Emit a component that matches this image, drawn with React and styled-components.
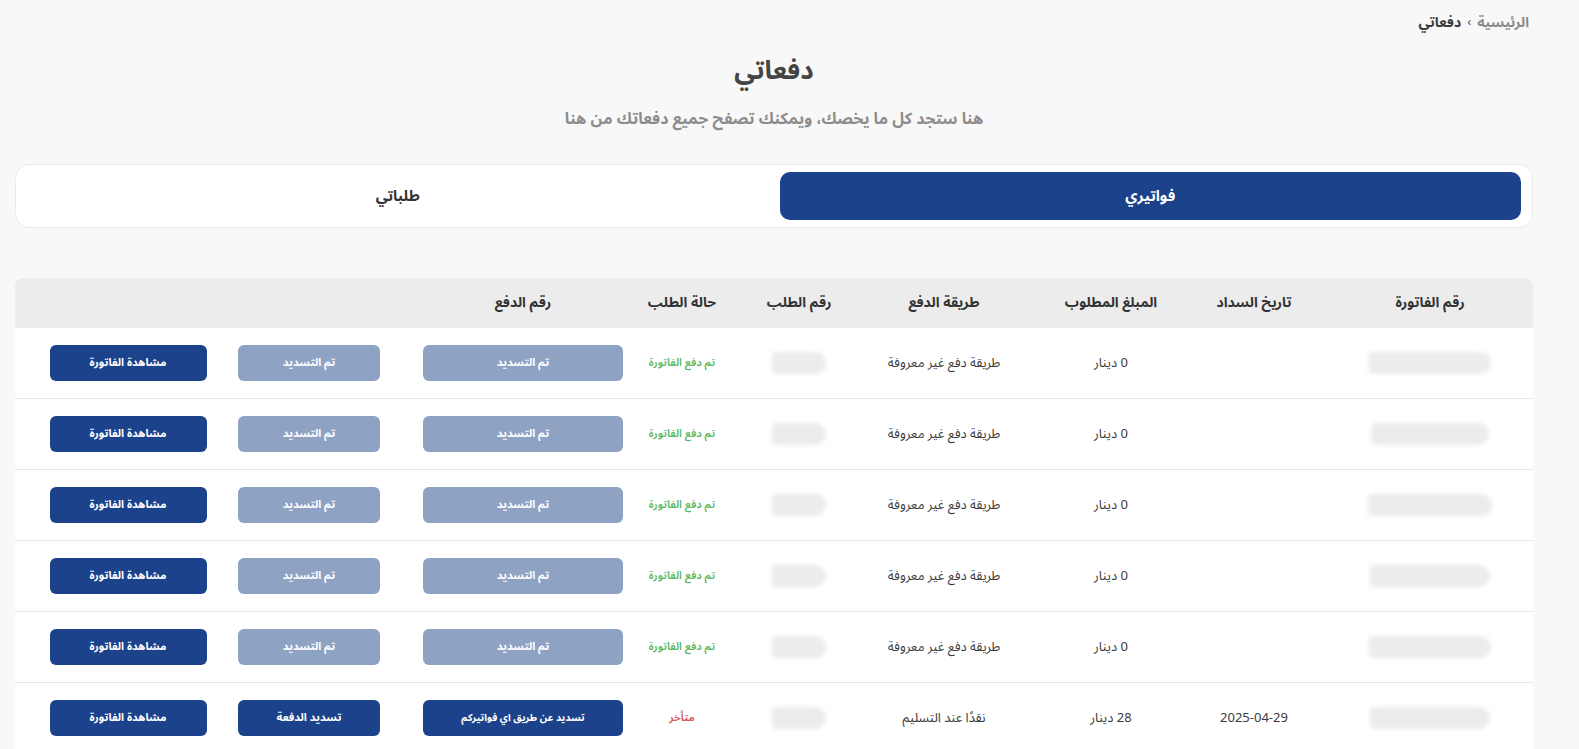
import React from "react";
import styled, { createGlobalStyle } from "styled-components";

const GlobalStyle = createGlobalStyle`
  html, body {
    margin: 0;
    padding: 0;
    background: #f8f8f8;
    overflow: hidden;
  }
  body {
    font-family: "Noto Sans Arabic", "Noto Sans", "DejaVu Sans", sans-serif;
    color: #3a3a3a;
  }
`;

const Page = styled.div`
  direction: rtl;
  padding: 0 46px 0 15px;
  min-height: 749px;
`;

const Breadcrumb = styled.nav`
  display: flex;
  align-items: center;
  gap: 6px;
  height: 44px;
  padding-right: 4px;
  font-size: 14px;
  font-weight: 700;
`;

const Crumb = styled.span`
  color: ${props => (props.current ? "#3b3b3b" : "#8a8a8a")};
`;

const Chevron = styled.span`
  color: #555;
  font-size: 13px;
  font-weight: 400;
`;

const Header = styled.header`
  display: flex;
  flex-direction: column;
  align-items: center;
  gap: 14px;
  margin-top: 10px;
`;

const Title = styled.h1`
  margin: 0;
  font-size: 26px;
  font-weight: 700;
  color: #444;
  line-height: 1.3;
`;

const Subtitle = styled.p`
  margin: 0;
  font-size: 16px;
  font-weight: 700;
  color: #8c8c8c;
`;

const Tabs = styled.div`
  display: grid;
  grid-template-columns: 1fr 1fr;
  gap: 11px;
  margin-top: 28px;
  padding: 7px 11px;
  height: 64px;
  box-sizing: border-box;
  background: #fff;
  border: 1px solid #ebebeb;
  border-radius: 14px;
`;

const Tab = styled.button`
  display: flex;
  align-items: center;
  justify-content: center;
  border: none;
  border-radius: 10px;
  font-family: inherit;
  font-size: 15px;
  font-weight: 700;
  cursor: pointer;
  background: ${props => (props.active ? "#1b428a" : "transparent")};
  color: ${props => (props.active ? "#fff" : "#333")};
`;

const Table = styled.div`
  margin-top: 50px;
  background: #fff;
  border-radius: 8px 8px 0 0;
  overflow: hidden;
`;

// right to left: invoice no, date, amount, method, order no, status, payment no, pay, view
const COLS = "234px 90px 196px 138px 152px 82px 236px 192px 170px";

const HeadRow = styled.div`
  display: grid;
  grid-template-columns: ${COLS};
  padding-left: 28px;
  height: 50px;
  background: #ececec;
`;

const HeadCell = styled.div`
  display: flex;
  align-items: center;
  justify-content: center;
  white-space: nowrap;
  font-size: 14px;
  font-weight: 700;
  color: #333;
  padding-left: ${props => (props.shift ? "28px" : "0")};
`;

const Row = styled.div`
  display: grid;
  grid-template-columns: ${COLS};
  padding-left: 28px;
  height: 70px;
  border-top: ${props => (props.first ? "none" : "1px solid #e6e6e6")};
`;

const Cell = styled.div`
  display: flex;
  align-items: center;
  justify-content: center;
  white-space: nowrap;
  font-size: 13px;
  color: ${props => props.color || "#3a3a3a"};
  font-weight: ${props => (props.bold ? 600 : 400)};
  padding-left: ${props => (props.shift ? "28px" : "0")};
`;

const Status = styled(Cell)`
  font-size: 11px;
`;

const Redacted = styled.div`
  width: ${props => props.w}px;
  height: 22px;
  background: #ececec;
  border-radius: 4px 14px 14px 4px;
  filter: blur(2px);
`;

const ActionButton = styled.button`
  width: ${props => props.w}px;
  height: 36px;
  border: none;
  border-radius: 6px;
  font-family: inherit;
  font-size: ${props => (props.small ? "10px" : "11px")};
  font-weight: 700;
  color: #fff;
  background: ${props => (props.muted ? "#8ea2c4" : "#1b428a")};
  cursor: ${props => (props.muted ? "default" : "pointer")};
`;

const headers = [
  "رقم الفاتورة",
  "تاريخ السداد",
  "المبلغ المطلوب",
  "طريقة الدفع",
  "رقم الطلب",
  "حالة الطلب",
  "رقم الدفع",
  "",
  "",
];

const rows = [
  { date: "", amount: "0 دينار", method: "طريقة دفع غير معروفة", paid: true, blob: 122 },
  { date: "", amount: "0 دينار", method: "طريقة دفع غير معروفة", paid: true, blob: 118 },
  { date: "", amount: "0 دينار", method: "طريقة دفع غير معروفة", paid: true, blob: 124 },
  { date: "", amount: "0 دينار", method: "طريقة دفع غير معروفة", paid: true, blob: 120 },
  { date: "", amount: "0 دينار", method: "طريقة دفع غير معروفة", paid: true, blob: 122 },
  { date: "2025-04-29", amount: "28 دينار", method: "نقدًا عند التسليم", paid: false, blob: 120 },
];

const App = () => (
  <>
    <GlobalStyle />
    <Page>
      <Breadcrumb>
        <Crumb>الرئيسية</Crumb>
        <Chevron>›</Chevron>
        <Crumb current>دفعاتي</Crumb>
      </Breadcrumb>

      <Header>
        <Title>دفعاتي</Title>
        <Subtitle>هنا ستجد كل ما يخصك، ويمكنك تصفح جميع دفعاتك من هنا</Subtitle>
      </Header>

      <Tabs>
        <Tab active>فواتيري</Tab>
        <Tab>طلباتي</Tab>
      </Tabs>

      <Table>
        <HeadRow>
          {headers.map((h, idx) => (
            <HeadCell key={idx} shift={idx === 0}>{h}</HeadCell>
          ))}
        </HeadRow>
        {rows.map((r, idx) => (
          <Row key={idx} first={idx === 0}>
            <Cell shift>
              <Redacted w={r.blob} />
            </Cell>
            <Cell>{r.date}</Cell>
            <Cell>{r.amount}</Cell>
            <Cell>{r.method}</Cell>
            <Cell>
              <Redacted w={54} />
            </Cell>
            {r.paid ? (
              <Status color="#5cb85c" bold>تم دفع الفاتورة</Status>
            ) : (
              <Status color="#d9534f" bold>متأخر</Status>
            )}
            <Cell>
              {r.paid ? (
                <ActionButton w={200} muted>تم التسديد</ActionButton>
              ) : (
                <ActionButton w={200} small>تسديد عن طريق اي فواتيركم</ActionButton>
              )}
            </Cell>
            <Cell>
              {r.paid ? (
                <ActionButton w={142} muted>تم التسديد</ActionButton>
              ) : (
                <ActionButton w={142}>تسديد الدفعة</ActionButton>
              )}
            </Cell>
            <Cell>
              <ActionButton w={157}>مشاهدة الفاتورة</ActionButton>
            </Cell>
          </Row>
        ))}
      </Table>
    </Page>
  </>
);

export default App;
